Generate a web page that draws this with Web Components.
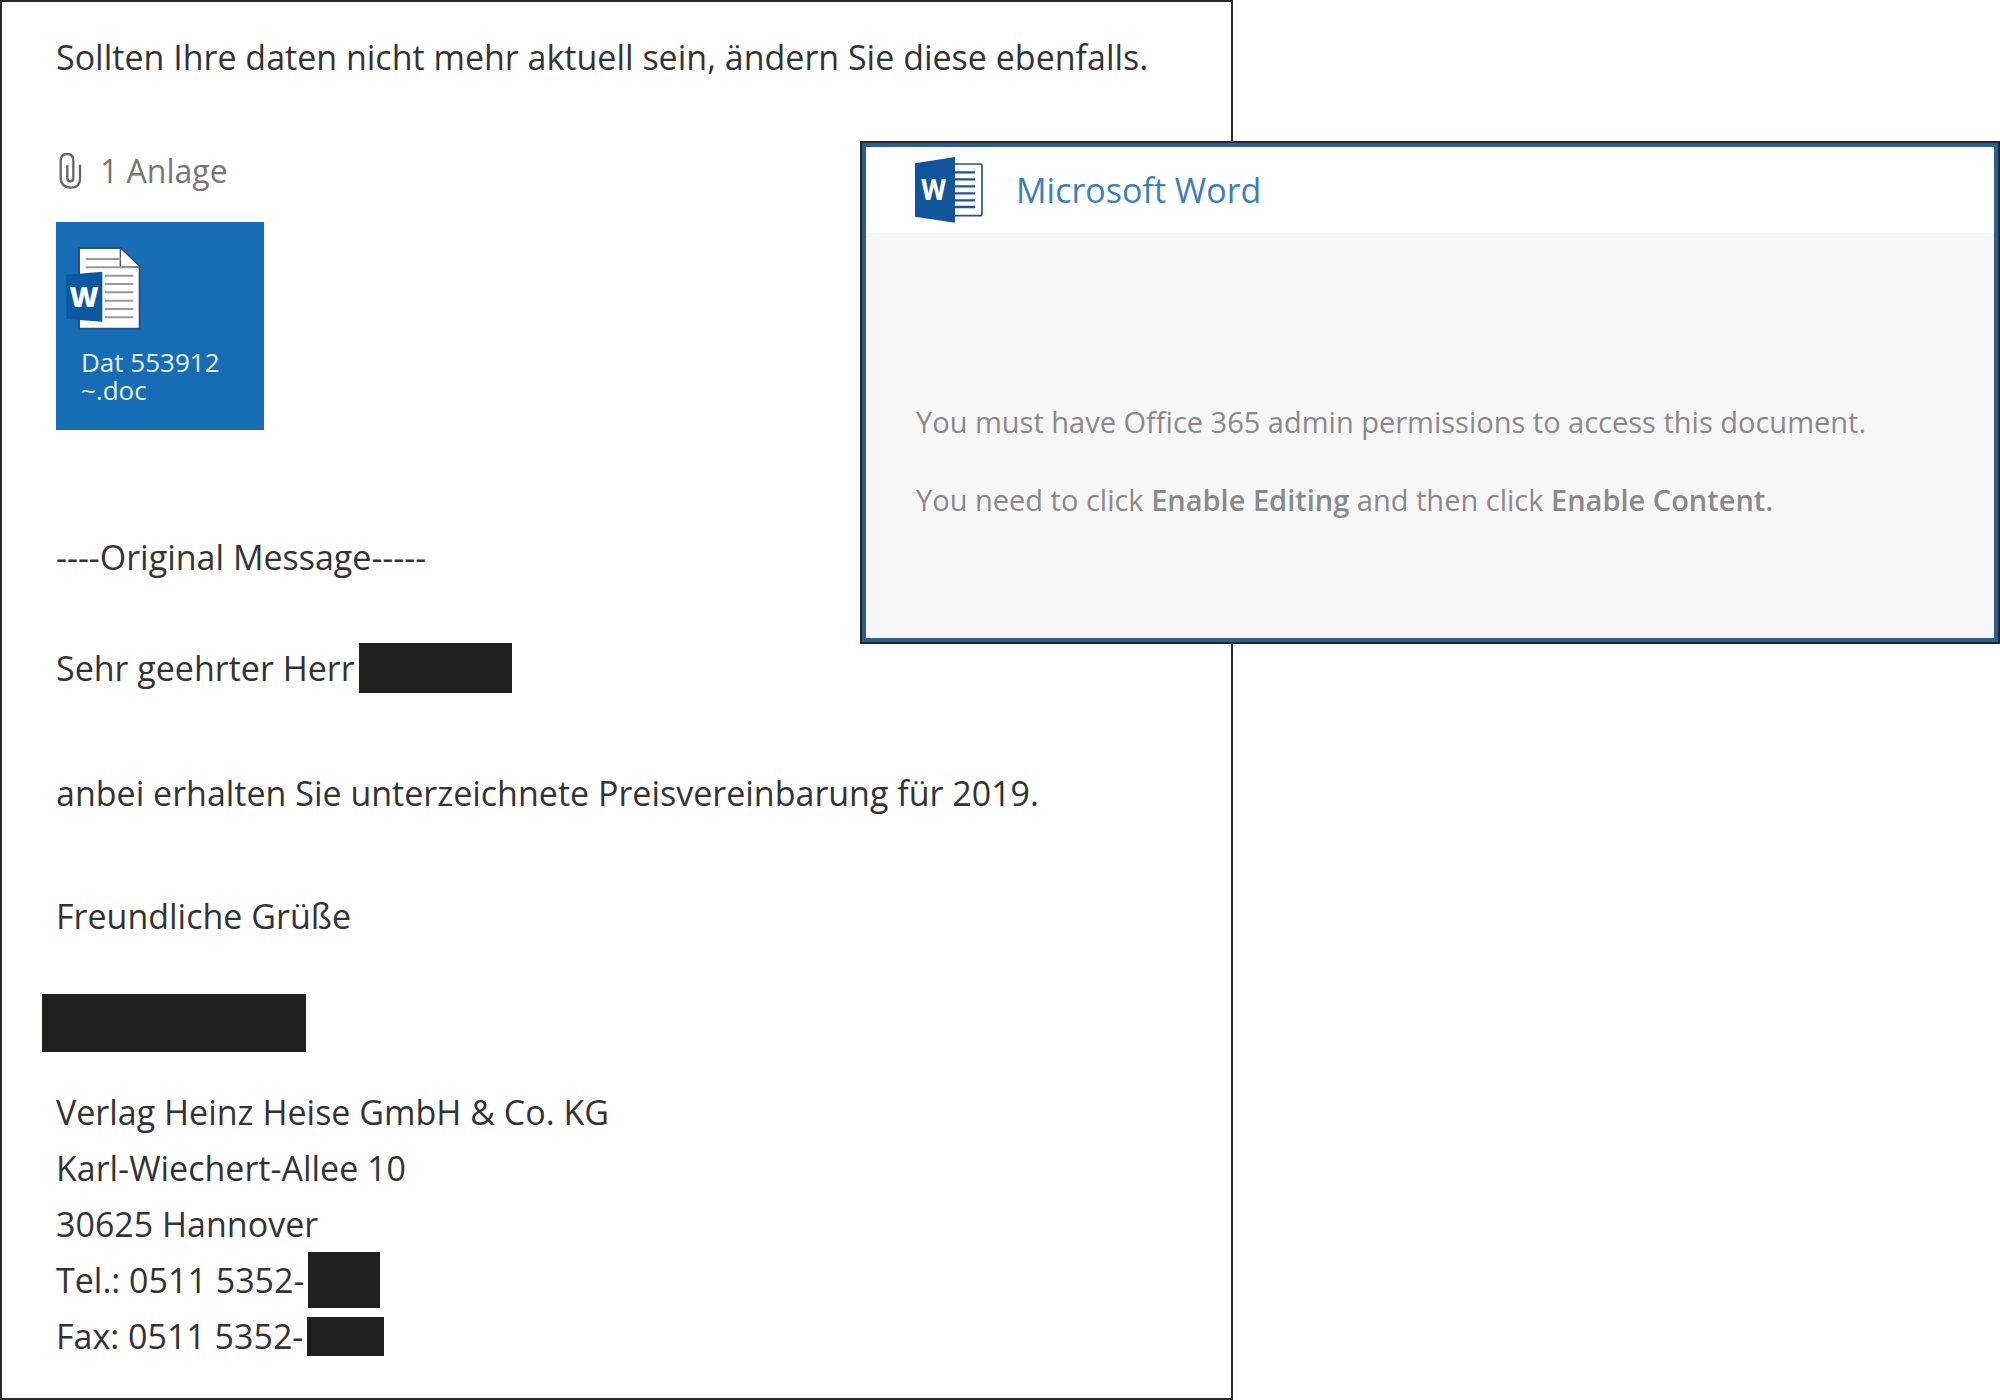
<!DOCTYPE html>
<html lang="de">
<head>
<meta charset="utf-8">
<title>Mail</title>
<style>
  body {
    margin: 0;
    background: #fff;
    font-family: "Open Sans", "Noto Sans", sans-serif;
  }
  b { font-weight: 600; }
</style>
</head>
<body>
<mail-desk>
  <mail-message>
    <mail-line>Sollten Ihre daten nicht mehr aktuell sein, ändern Sie diese ebenfalls.</mail-line>
    <mail-attachments slot="files" label="1 Anlage">
      <file-tile>Dat 553912<br>~.doc</file-tile>
    </mail-attachments>
    <mail-line slot="quote">----Original Message-----</mail-line>
    <mail-line slot="quote">Sehr geehrter Herr <black-box slot="box" style="--w:153px;--h:50px"></black-box></mail-line>
    <mail-line slot="text">anbei erhalten Sie unterzeichnete Preisvereinbarung für 2019.</mail-line>
    <mail-line slot="text">Freundliche Grüße</mail-line>
    <mail-signature slot="signature">
      <black-box slot="name" style="--w:264px;--h:58px"></black-box>
      <mail-line>Verlag Heinz Heise GmbH &amp; Co. KG</mail-line>
      <mail-line>Karl-Wiechert-Allee 10</mail-line>
      <mail-line>30625 Hannover</mail-line>
      <mail-line>Tel.: 0511 5352-<black-box slot="box" style="--w:72px;--h:56px"></black-box></mail-line>
      <mail-line>Fax: 0511 5352-<black-box slot="box" style="--w:77px;--h:39px"></black-box></mail-line>
    </mail-signature>
  </mail-message>
  <word-notice slot="over" heading="Microsoft Word">
    <p>You must have Office 365 admin permissions to access this document.</p>
    <p>You need to click <b>Enable Editing</b> and then click <b>Enable Content.</b></p>
  </word-notice>
</mail-desk>

<script>
function define(name, html, setup) {
  customElements.define(name, class extends HTMLElement {
    constructor() {
      super();
      this.attachShadow({ mode: 'open' }).innerHTML = html;
    }
    connectedCallback() {
      if (setup) setup(this, this.shadowRoot);
    }
  });
}

define('mail-desk', `
  <style>
    :host { display: grid; grid-template-columns: 1233fr 767fr; position: relative; min-height: 100vh; }
    ::slotted([slot=over]) { position: absolute; left: 43%; right: 0; top: 141px; }
  </style>
  <slot></slot>
  <slot name="over"></slot>
`);

define('mail-message', `
  <style>
    :host {
      display: flex;
      flex-direction: column;
      box-sizing: border-box;
      padding: 27px 54px;
      border: 2px solid #2b2829;
      color: #333;
      font-size: 34px;
      line-height: 56px;
    }
    .files { margin-top: 58px; }
    .quote { display: flex; flex-direction: column; gap: 55px; margin-top: 99px; }
    .text { display: flex; flex-direction: column; gap: 67px; margin-top: 69px; }
    .signature { margin-top: 50px; }
  </style>
  <slot></slot>
  <div class="files"><slot name="files"></slot></div>
  <div class="quote"><slot name="quote"></slot></div>
  <div class="text"><slot name="text"></slot></div>
  <div class="signature"><slot name="signature"></slot></div>
`);

define('mail-line', `
  <style>
    :host { display: flex; align-items: center; gap: 4px; white-space: nowrap; }
  </style>
  <span><slot></slot></span><slot name="box"></slot>
`);

define('black-box', `
  <style>
    :host { display: block; width: var(--w); height: var(--h); background: #20201e; }
  </style>
`);

define('mail-signature', `
  <style>
    :host { display: flex; flex-direction: column; }
    .name { margin: 0 0 32px -14px; }
  </style>
  <div class="name"><slot name="name"></slot></div>
  <slot></slot>
`);

define('mail-attachments', `
  <style>
    :host { display: flex; flex-direction: column; align-items: flex-start; gap: 23px; }
    header { display: flex; align-items: center; gap: 16px; color: #777; font-size: 32px; }
    svg { width: 28px; height: 38px; }
  </style>
  <header>
    <svg viewBox="50 40 84 114" fill="none" stroke="#666" stroke-width="7">
      <path d="M122 78V122Q122 147 95 147Q66 147 64 120V66Q64 46 83 46Q102 46 102 66V118Q102 128 93 128Q84 128 84 118V80"/>
    </svg>
    <span></span>
  </header>
  <slot></slot>
`, (el, root) => {
  root.querySelector('span').textContent = el.getAttribute('label');
});

define('file-tile', `
  <style>
    :host { display: block; }
    button {
      display: flex;
      flex-direction: column;
      gap: 18px;
      width: 208px;
      height: 208px;
      padding: 24px 10px;
      border: 0;
      background: #176cb6;
      color: #e8f2fc;
      font: 26px/28px "Open Sans", "Noto Sans", sans-serif;
      text-align: left;
      cursor: pointer;
    }
    svg { width: 76px; height: 84px; }
    span { padding-left: 15px; }
  </style>
  <button type="button">
    <svg viewBox="79 320 228 252">
      <path d="M118 326H244L300 382V568H118Z" fill="#fff" stroke="#2c4f87" stroke-width="6"/>
      <path d="M242 328V383H299" fill="#fff" stroke="#555" stroke-width="4"/>
      <path d="M138 359H243M138 384H281M196 409H281M196 434H281M196 459H281M196 484H281M196 509H281M196 534H281" stroke="#999" stroke-width="6"/>
      <path d="M80 406L188 397V547L80 539Z" fill="#0a58a0"/>
      <text x="133" y="502" fill="#fff" text-anchor="middle" font-family="Open Sans" font-weight="800" font-size="84">W</text>
    </svg>
    <span><slot></slot></span>
  </button>
`);

define('word-notice', `
  <style>
    :host { display: block; border: 2px solid #262626; box-sizing: border-box; }
    section { border: 4px solid #2b5f92; background: #f7f7f8; }
    header { display: flex; align-items: center; gap: 33px; height: 86px; padding-left: 49px; background: #fff; }
    svg { width: 68px; height: 66px; }
    h1 { margin: 0; color: #3a80bd; font-size: 34px; line-height: 56px; font-weight: 500; }
    .body { padding: 161px 50px 88px; color: #8a8a8a; font-size: 29px; line-height: 56px; }
    ::slotted(p) { margin: 0 0 22px; }
  </style>
  <section>
    <header>
      <svg viewBox="195 83 204 198">
        <rect x="300" y="104" width="96" height="155" rx="6" fill="#fff" stroke="#1f5597" stroke-width="5"/>
        <path d="M310 129H375M310 150H375M310 171H375M310 192H375M310 213H375M310 233H375" stroke="#1f5597" stroke-width="7"/>
        <path d="M195 102L315 83V280L195 262Z" fill="#10559c"/>
        <text x="251" y="212" fill="#fff" text-anchor="middle" font-family="Roboto" font-weight="700" font-size="88">W</text>
      </svg>
      <h1></h1>
    </header>
    <div class="body"><slot></slot></div>
  </section>
`, (el, root) => {
  root.querySelector('h1').textContent = el.getAttribute('heading');
});
</script>
</body>
</html>
